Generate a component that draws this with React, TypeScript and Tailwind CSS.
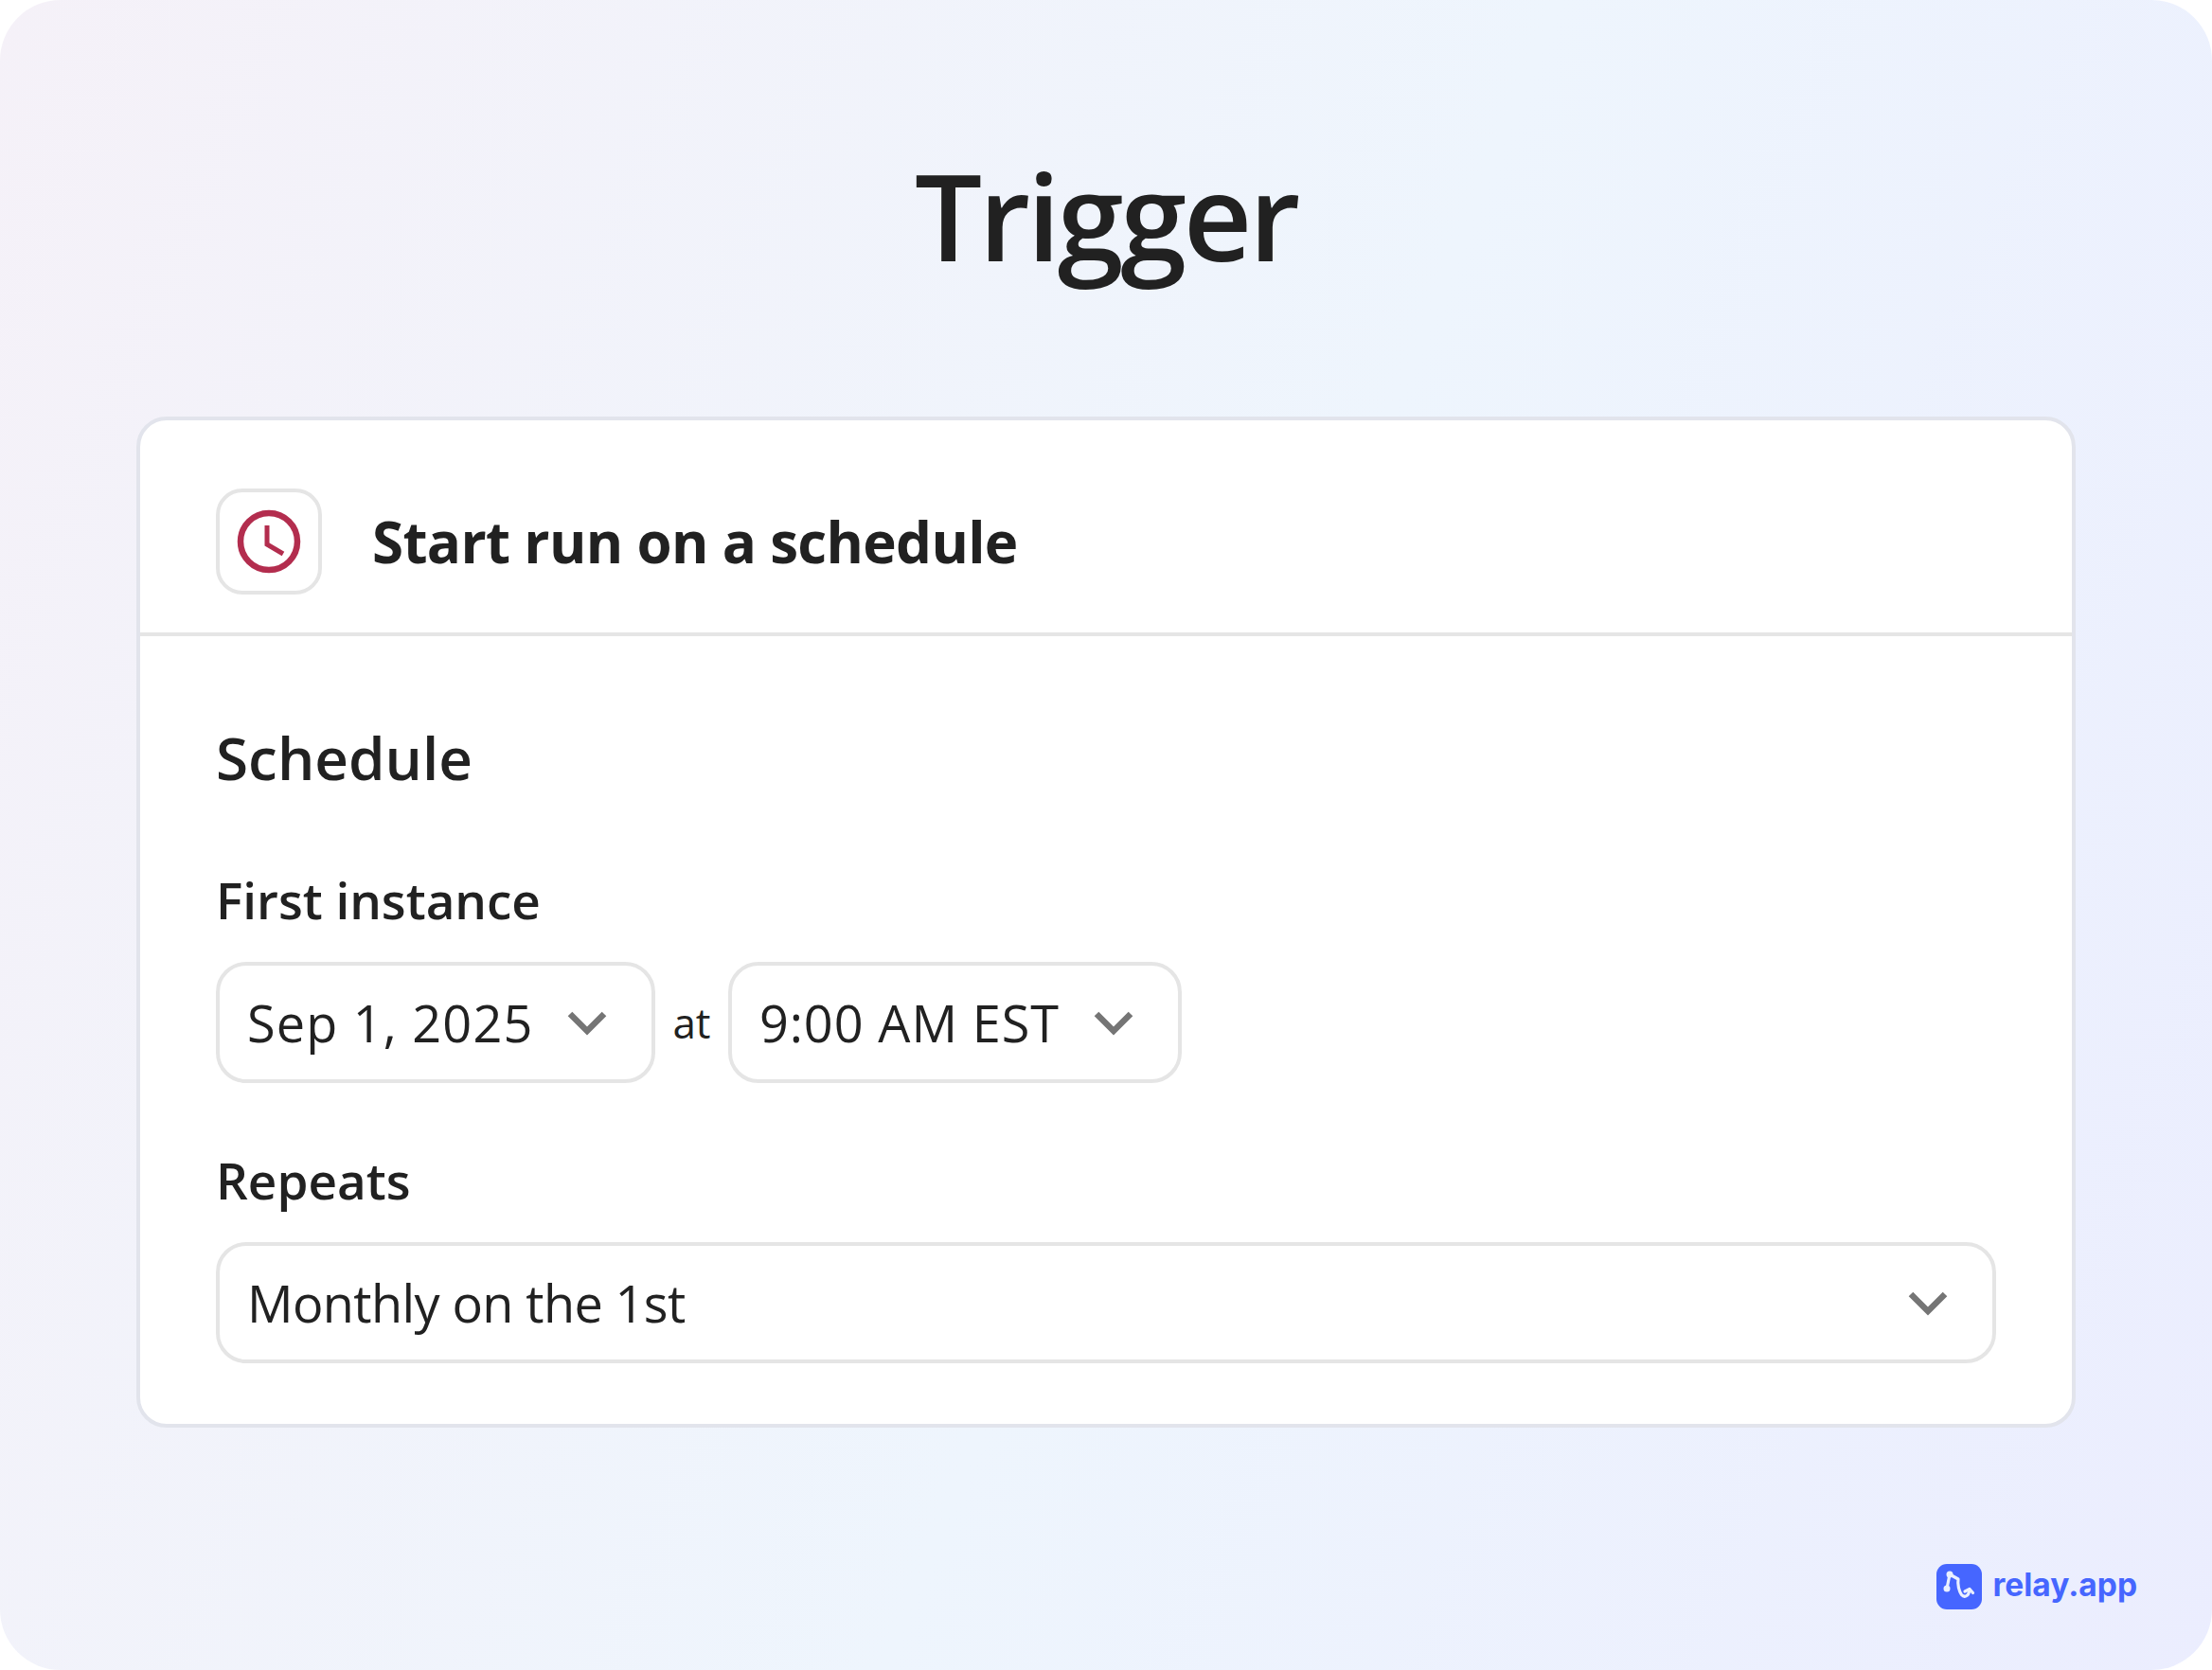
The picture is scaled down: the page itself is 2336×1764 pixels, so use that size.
const font = "font-['Open_Sans','Liberation_Sans',sans-serif]";

const Chevron = () => (
  <svg width="44" height="44" viewBox="0 0 44 44" fill="none" className="shrink-0">
    <path d="M4 13 L22 31 L40 13" stroke="#757575" strokeWidth="6.5" />
  </svg>
);

const Select = ({ label, className, textClass }: { label: string; className: string; textClass: string }) => (
  <div className={`flex h-[128px] items-center justify-between rounded-[32px] border-4 border-[#e5e5e5] bg-white pl-[29px] ${className}`}>
    <span className={`text-[54px] leading-none text-[#212121] ${textClass}`}>{label}</span>
    <Chevron />
  </div>
);

export default function App() {
  return (
    <div className={`${font} flex h-[1764px] w-[2336px] flex-col rounded-[64px] bg-[linear-gradient(112deg,#f5f1f8_0%,#eef5fd_54%,#ebedfe_100%)]`}>
      <div className="flex h-[440px] items-center justify-center pt-[14px]">
        <h1 className="text-[126px] leading-none font-semibold tracking-[-3.3px] text-[#212121]">Trigger</h1>
      </div>

      <div className="mx-[144px] flex h-[1068px] flex-col rounded-[32px] border-4 border-[#e2e4ec] bg-white">
        <div className="flex h-[228px] items-center gap-[53px] border-b-4 border-[#e5e5e5] pl-[80px] pt-[32px]">
          <div className="flex h-[112px] w-[112px] items-center justify-center rounded-[28px] border-4 border-[#e5e5e5]">
            <svg width="68" height="68" viewBox="0 0 68 68" fill="none">
              <circle cx="34" cy="34" r="30" stroke="#b32d4e" strokeWidth="6.5" />
              <path d="M32 17 V37 L49 47" stroke="#b32d4e" strokeWidth="5" />
            </svg>
          </div>
          <span className="text-[60px] leading-none font-bold tracking-[-0.65px] text-[#212121]">Start run on a schedule</span>
        </div>

        <div className="flex flex-col px-[80px]">
          <h2 className="mt-[93px] text-[62px] leading-[70px] font-semibold text-[#212121]">Schedule</h2>
          <label className="mt-[86px] text-[53px] leading-[60px] font-semibold text-[#212121]">First instance</label>
          <div className="mt-[35px] flex items-center">
            <Select label="Sep 1, 2025" textClass="tracking-[1.2px]" className="w-[464px] pr-[46px]" />
            <span className="w-[77px] text-center text-[44px] leading-none text-[#212121]">at</span>
            <Select label="9:00 AM EST" textClass="tracking-[0.9px]" className="w-[479px] pr-[46px]" />
          </div>
          <label className="mt-[73px] text-[53px] leading-[60px] font-semibold text-[#212121]">Repeats</label>
          <div className="mt-[35px]">
            <Select label="Monthly on the 1st" textClass="tracking-[-0.6px]" className="w-full pr-[46px]" />
          </div>
        </div>
      </div>

      <div className="mt-[144px] flex items-center justify-end gap-[12px] pr-[79px]">
        <svg width="48" height="48" viewBox="0 0 48 48">
          <rect width="48" height="48" rx="11" fill="#4666ff" />
          <g fill="none" stroke="#eaf0ff" strokeWidth="3.2" strokeLinecap="round" strokeLinejoin="round">
            <path d="M14 11 L11 26" />
            <path d="M14 11 L23 16 C22 22 24 29 26.5 32.5 C29 35.5 34 35 35 27" />
            <path d="M30 29 L35 26.5 L38.5 30.5" />
          </g>
          <circle cx="14" cy="11" r="3.5" fill="#eaf0ff" />
          <circle cx="11" cy="26" r="3.5" fill="#eaf0ff" />
        </svg>
        <span className="-mt-[2px] font-['Inter',sans-serif] text-[33.5px] leading-none font-bold text-[#4666ff]">relay.app</span>
      </div>
    </div>
  );
}
